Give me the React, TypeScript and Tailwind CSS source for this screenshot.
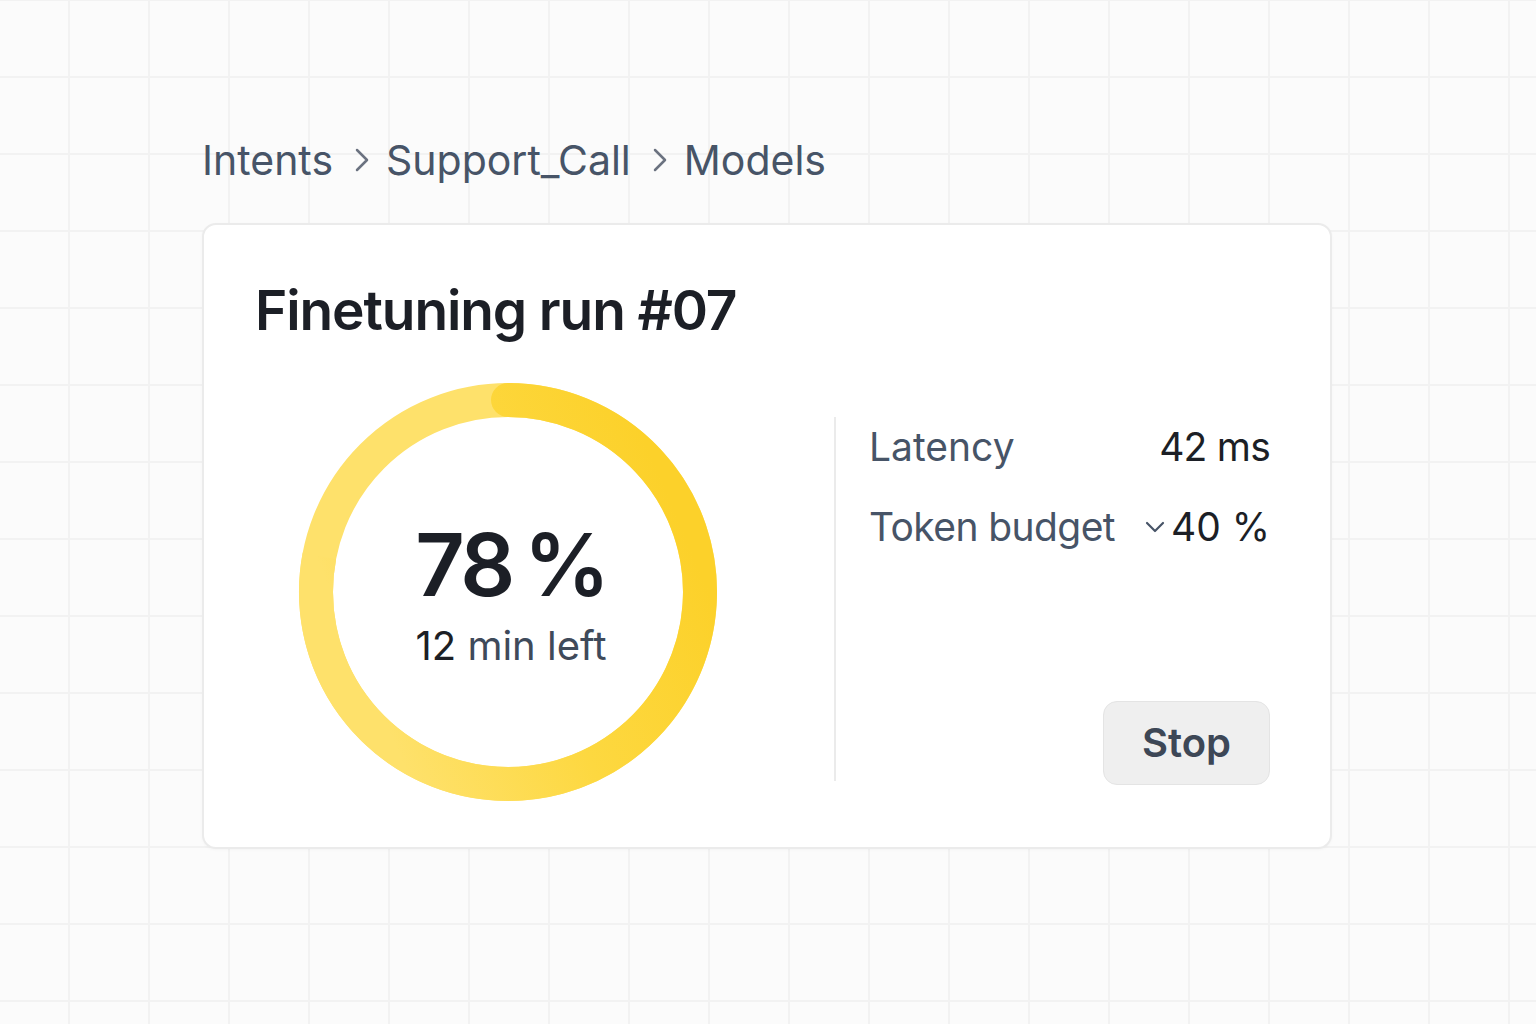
import { ChevronRight, ChevronDown } from "lucide-react";

const crumbs = ["Intents", "Support_Call", "Models"];

function ProgressRing({ value }: { value: number }) {
  const r = 192;
  const cx = 210;
  const cy = 210;
  const a = (value / 100) * Math.PI * 2;
  const ex = cx + r * Math.sin(a);
  const ey = cy - r * Math.cos(a);
  const large = value > 50 ? 1 : 0;
  return (
    <svg width="420" height="420" viewBox="0 0 420 420" className="block">
      <defs>
        <linearGradient id="ringGrad" gradientUnits="userSpaceOnUse" x1="340" y1="40" x2="18" y2="175">
          <stop offset="0" stopColor="#fcd12a" />
          <stop offset="0.5" stopColor="#fdd840" />
          <stop offset="1" stopColor="#fee16b" />
        </linearGradient>
      </defs>
      <circle cx={cx} cy={cy} r={r} fill="none" stroke="#fee16b" strokeWidth="34" />
      <path
        d={`M ${cx} ${cy - r} A ${r} ${r} 0 ${large} 1 ${ex} ${ey}`}
        fill="none"
        stroke="url(#ringGrad)"
        strokeWidth="34"
      />
      {/* rounded start cap only */}
      <circle cx={cx} cy={cy - r} r="17" fill="url(#ringGrad)" />
    </svg>
  );
}

export default function App() {
  return (
    <div className="min-h-screen w-full bg-[#fbfbfb] bg-[linear-gradient(to_right,#f2f2f2_2px,transparent_2px),linear-gradient(to_bottom,#f2f2f2_2px,transparent_2px)] bg-[size:80px_77px] bg-[position:68px_-1px] font-['Inter','Noto_Sans',sans-serif]">
      <div className="pl-[202px] pt-[134px]">
        {/* breadcrumb */}
        <nav className="flex items-center text-[41px] leading-[52px] text-[#475467]">
          {crumbs.map((c, i) => (
            <div key={c} className="flex items-center">
              {i > 0 && (
                <ChevronRight className="ml-[9px] mr-[4px] h-[40px] w-[40px] text-[#6b7280]" strokeWidth={1.5} />
              )}
              <span>{c}</span>
            </div>
          ))}
        </nav>

        {/* card */}
        <div className="mt-[37px] h-[626px] w-[1130px] rounded-[14px] border-2 border-[#ebebeb] bg-white pl-[51px] pr-[60px] shadow-[0_1px_3px_rgba(0,0,0,0.03)]">
          <h1 className="pt-[53px] text-[55px] font-semibold leading-[64px] tracking-[-0.02em] text-[#1c1f26]">
            Finetuning run #07
          </h1>

          <div className="mt-[40px] flex">
            <div className="relative ml-[43px] h-[420px] w-[420px] shrink-0">
              <ProgressRing value={78} />
              <div className="absolute inset-x-0 top-[135px] flex flex-col items-center pl-[6px]">
                <div className="text-[86px] font-semibold leading-[96px] tracking-[-0.04em] text-[#1c1f26]">
                  78<span className="ml-[12px]">%</span>
                </div>
                <div className="mt-[9px] text-[40px] leading-[48px] text-[#3f4a5a]">
                  <span className="text-[#1c1f26]">12</span> min left
                </div>
              </div>
            </div>

            <div className="ml-[116px] mt-[35px] h-[364px] w-[2px] bg-[#ebebeb]" />

            <div className="ml-[33px] mt-[39px] flex h-[364px] flex-1 flex-col">
              <div className="flex items-center justify-between text-[39px] leading-[52px]">
                <span className="text-[#475467]">Latency</span>
                <span className="tracking-[-0.02em] text-[#1c1f26]">42 ms</span>
              </div>
              <div className="mt-[28px] flex items-center justify-between text-[39px] leading-[52px]">
                <span className="tracking-[-0.015em] text-[#475467]">Token budget</span>
                <span className="flex items-center text-[#1c1f26]">
                  <ChevronDown className="h-[32px] w-[32px] text-[#475467]" strokeWidth={1.6} />
                  40 %
                </span>
              </div>
              <div className="mt-auto flex justify-end">
                <button
                  type="button"
                  className="h-[84px] w-[167px] rounded-[14px] border border-[#e4e4e4] bg-[#efefef] text-[40px] font-semibold text-[#3d4756]"
                >
                  Stop
                </button>
              </div>
            </div>
          </div>
        </div>
      </div>
    </div>
  );
}
